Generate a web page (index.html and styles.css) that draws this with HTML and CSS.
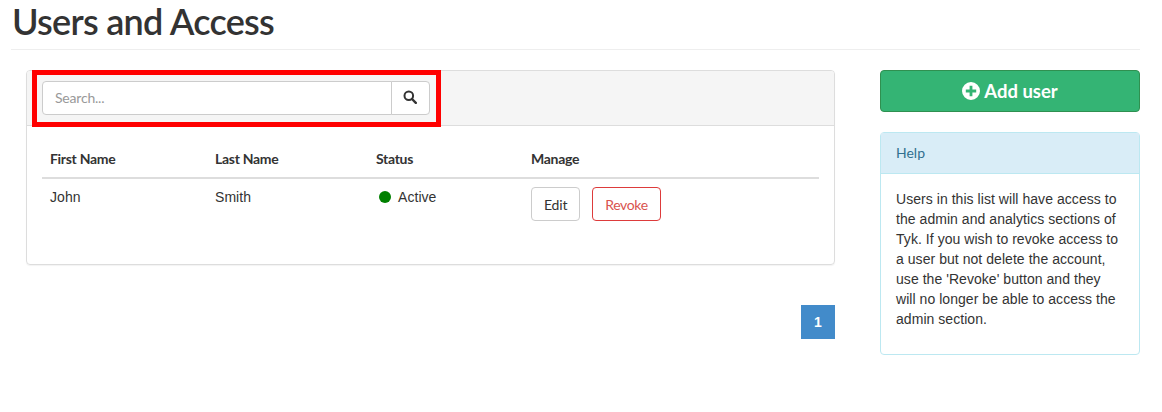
FILE: index.html
```html
<!DOCTYPE html>
<html>
<head>
  <meta charset="utf-8"/>
  <title>Users and Access</title>
  <link rel="stylesheet" href="styles.css">
</head>
<body>

<h1 class="page-title">Users and Access</h1>

<div class="page-row">
  <div class="main-col">
    <div class="card">
      <div class="card-header">
        <div class="search-group">
          <input class="search-input" type="text" placeholder="Search..."/>
          <button class="search-button" type="button">
            <svg width="14" height="14" viewBox="0 0 14 14" fill="none" stroke="#333" stroke-width="2">
              <circle cx="5.8" cy="5.8" r="4.3"/>
              <line x1="9" y1="9" x2="12.8" y2="12.8" stroke-width="2.4" stroke-linecap="round"/>
            </svg>
          </button>
        </div>
        <div class="highlight"></div>
      </div>
      <div class="card-body">
        <table class="users">
          <thead>
            <tr>
              <th class="col-first">First Name</th>
              <th class="col-last">Last Name</th>
              <th class="col-status">Status</th>
              <th>Manage</th>
            </tr>
          </thead>
          <tbody>
            <tr>
              <td>John</td>
              <td>Smith</td>
              <td><span class="status-dot"></span>Active</td>
              <td>
                <button class="btn" type="button">Edit</button>
                <button class="btn btn-revoke" type="button">Revoke</button>
              </td>
            </tr>
          </tbody>
        </table>
      </div>
    </div>
    <div class="pagination">
      <a class="page-link">1</a>
    </div>
  </div>

  <div class="side-col">
    <button class="add-user" type="button">
      <svg width="18" height="18" viewBox="0 0 18 18">
        <path fill="#fff" fill-rule="evenodd" d="M9 0a9 9 0 1 0 0 18A9 9 0 0 0 9 0zM7.6 3.8h2.8v3.8h3.8v2.8h-3.8v3.8H7.6v-3.8H3.8V7.6h3.8z"/>
      </svg>
      Add user
    </button>
    <div class="help">
      <div class="help-title">Help</div>
      <div class="help-body">
        Users in this list will have access to the admin and analytics sections of Tyk. If you wish to revoke access to a user but not delete the account, use the 'Revoke' button and they will no longer be able to access the admin section.
      </div>
    </div>
  </div>
</div>

</body>
</html>
```

FILE: styles.css
```css
body {
  margin: 0;
  padding: 0 22px 0 11px;
  background-color: #fff;
  color: #333;
  font-family: "Liberation Sans", arial, sans-serif;
  font-size: 14px;
  line-height: 20px;
}
button, input {
  font-family: Lato, sans-serif;
}
.page-title {
  margin: 0 0 20px;
  padding: 1px 0 7px 1px;
  height: 41px;
  border-bottom: 1px solid #eee;
  font-family: Lato, sans-serif;
  font-size: 36px;
  font-weight: 600;
  line-height: 41px;
  letter-spacing: -0.72px;
}
.page-row {
  display: grid;
  grid-template-columns: 809px 260px;
  justify-content: space-between;
  padding-left: 15px;
}
.card {
  height: 195px;
  box-sizing: border-box;
  border: 1px solid #ddd;
  border-radius: 4px;
  box-shadow: 0 1px 1px rgba(0, 0, 0, .05);
}
.card-header {
  position: relative;
  height: 55px;
  box-sizing: border-box;
  padding: 10px 15px;
  border-bottom: 1px solid #ddd;
  border-radius: 3px 3px 0 0;
  background-color: #f5f5f5;
}
.search-group {
  display: flex;
  width: 388px;
  height: 34px;
}
.search-input {
  flex: 1;
  min-width: 0;
  box-sizing: border-box;
  padding: 6px 12px 7px;
  border: 1px solid #ccc;
  border-radius: 4px 0 0 4px;
  font-size: 14px;
  letter-spacing: -0.2px;
}
.search-input::placeholder {
  color: #999;
}
.search-button {
  width: 39px;
  margin-left: -1px;
  padding: 1px 2px 0 0;
  border: 1px solid #ccc;
  border-radius: 0 4px 4px 0;
  background-color: #fff;
}
.highlight {
  position: absolute;
  left: 5px;
  top: -1px;
  width: 399px;
  height: 47px;
  border: 5px solid #f00;
}
.card-body {
  padding: 15px 15px 0;
}
.users {
  width: 100%;
  border-collapse: collapse;
  table-layout: fixed;
}
.col-first {
  width: 149px;
}
.col-last {
  width: 145px;
}
.col-status {
  width: 139px;
}
.users th {
  padding: 8px;
  border-bottom: 2px solid #ddd;
  font-family: Lato, sans-serif;
  font-weight: 700;
  letter-spacing: -0.3px;
  text-align: left;
}
.users td {
  padding: 8px;
  letter-spacing: 0.05px;
  vertical-align: top;
}
.status-dot {
  display: inline-block;
  width: 12px;
  height: 12px;
  margin: 0 7px 0 3px;
  border-radius: 50%;
  background-color: #008000;
  vertical-align: -1px;
}
.btn {
  height: 34px;
  margin-right: 8px;
  padding: 0 12px;
  border: 1px solid #ccc;
  border-radius: 4px;
  background-color: #fff;
  color: #333;
  font-size: 14px;
  letter-spacing: -0.2px;
}
.btn-revoke {
  border-color: #dd3b3b;
  color: #d9534f;
  letter-spacing: -0.35px;
}
.pagination {
  display: flex;
  justify-content: flex-end;
  margin-top: 40px;
}
.page-link {
  width: 34px;
  height: 34px;
  background-color: #428bca;
  color: #fff;
  font-weight: 700;
  line-height: 34px;
  text-align: center;
}
.add-user {
  display: flex;
  align-items: center;
  justify-content: center;
  gap: 4px;
  width: 100%;
  height: 42px;
  border: 1px solid #2f9050;
  border-radius: 4px;
  background-color: #34b474;
  color: #fff;
  font-size: 18.5px;
  font-weight: 700;
}
.help {
  margin-top: 20px;
  border: 1px solid #bce8f1;
  border-radius: 4px;
}
.help-title {
  padding: 10px 15px;
  border-bottom: 1px solid #bce8f1;
  background-color: #d9edf7;
  color: #31708f;
  font-family: Lato, sans-serif;
}
.help-body {
  height: 150px;
  padding: 15px 18px 15px 15px;
  letter-spacing: 0.05px;
}
```
